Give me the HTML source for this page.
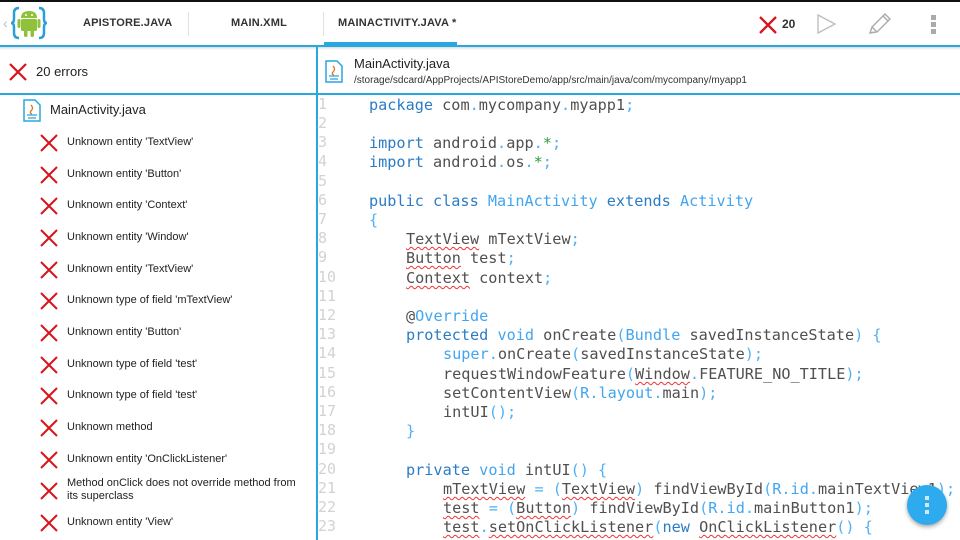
<!DOCTYPE html>
<html><head><meta charset="utf-8"><style>
*{margin:0;padding:0;box-sizing:border-box}
body{width:960px;height:540px;overflow:hidden;background:#fff;font-family:"Liberation Sans",sans-serif;position:relative}
.abs{position:absolute}
.tab{position:absolute;top:17px;font-size:11px;font-weight:bold;color:#333;letter-spacing:0.2px}
.err{position:absolute;left:40px;font-size:11px;color:#222;line-height:13px}
.err svg{position:absolute;left:0;top:-1px}
.err span{position:absolute;left:27px;top:1px;white-space:nowrap}
.ln{position:absolute;left:318px;font-family:"DejaVu Sans Mono",monospace;font-size:15px;color:#d2d2d2}
.cl{position:absolute;font-family:"DejaVu Sans Mono",monospace;font-size:15.2px;color:#505050;white-space:pre;margin-top:1px}
.k{color:#2b7cc4}.t{color:#42a5f0}.p{color:#4fb0f5}.g{color:#2e9e3a}
.u{text-decoration:underline wavy #e33;text-decoration-thickness:1px;text-underline-offset:2px}
</style></head><body>
<div class="abs" style="left:0;top:0;width:960px;height:2px;background:#111"></div>
<svg class="abs" style="left:2px;top:4px" width="52" height="38" viewBox="0 0 52 36">
<text x="1" y="23" font-size="14" fill="#bbb" font-family="Liberation Sans">‹</text>
<path d="M17 3 Q12 3 12 8 L12 14 Q12 18 9 18 Q12 18 12 22 L12 28 Q12 33 17 33" fill="none" stroke="#2a9fd8" stroke-width="2.5"/>
<path d="M37 3 Q42 3 42 8 L42 14 Q42 18 45 18 Q42 18 42 22 L42 28 Q42 33 37 33" fill="none" stroke="#2a9fd8" stroke-width="2.5"/>
<path d="M19 13 Q19 6 27 6 Q35 6 35 13 Z" fill="#8fc23a"/>
<rect x="19" y="14" width="16" height="12" rx="1.5" fill="#8fc23a"/>
<rect x="15.5" y="14" width="3" height="9" rx="1.5" fill="#8fc23a"/>
<rect x="35.5" y="14" width="3" height="9" rx="1.5" fill="#8fc23a"/>
<rect x="22" y="25" width="3.5" height="7" rx="1.5" fill="#8fc23a"/>
<rect x="28.5" y="25" width="3.5" height="7" rx="1.5" fill="#8fc23a"/>
<circle cx="24" cy="10" r="1" fill="#fff"/><circle cx="30" cy="10" r="1" fill="#fff"/>
</svg>
<div class="tab" style="left:83px">APISTORE.JAVA</div>
<div class="abs" style="left:188px;top:12px;width:1px;height:24px;background:#e2e2e2"></div>
<div class="tab" style="left:231px">MAIN.XML</div>
<div class="abs" style="left:323px;top:12px;width:1px;height:24px;background:#e2e2e2"></div>
<div class="tab" style="left:338px">MAINACTIVITY.JAVA *</div>
<div class="abs" style="left:324px;top:42px;width:133px;height:3px;background:#29a7df"></div>
<svg class="abs" style="left:758px;top:15px" width="20" height="20"><path d="M2 2L18 18M18 2L2 18" stroke="#d8141b" stroke-width="2.3"/></svg>
<div class="abs" style="left:782px;top:17px;font-size:12px;font-weight:bold;color:#333">20</div>
<svg class="abs" style="left:816px;top:13px" width="22" height="22"><path d="M2 2L19 11L2 20Z" fill="none" stroke="#bbb" stroke-width="1.3"/></svg>
<svg class="abs" style="left:866px;top:12px" width="26" height="24"><path d="M4 21L6 15L19 2L24 7L11 20Z M6 15L11 20 M17 4L22 9 M4 21L8 20" fill="none" stroke="#aaa" stroke-width="1.4"/></svg>
<div class="abs" style="left:931px;top:15px;width:5px;height:5px;background:#aaa"></div>
<div class="abs" style="left:931px;top:22px;width:5px;height:5px;background:#aaa"></div>
<div class="abs" style="left:931px;top:29px;width:5px;height:5px;background:#aaa"></div>
<div class="abs" style="left:0;top:45px;width:960px;height:2px;background:#29a7df"></div>
<div class="abs" style="left:0;top:47px;width:960px;height:3px;background:linear-gradient(#ddd,#fff)"></div>
<div class="abs" style="left:316px;top:47px;width:2px;height:493px;background:#29a7df"></div>
<div class="abs" style="left:0;top:93px;width:960px;height:2px;background:#29a7df"></div>
<svg class="abs" style="left:9px;top:63px" width="18" height="18"><path d="M1 1L17 17M17 1L1 17" stroke="#d8141b" stroke-width="2.2"/></svg>
<div class="abs" style="left:36px;top:64px;font-size:13px;color:#222">20 errors</div>
<svg class="abs" style="left:325px;top:60px" width="18" height="23" viewBox="0 0 18 23"><path d="M1 1H12L17 6V22H1Z" fill="#fff" stroke="#29a7df" stroke-width="1.5"/><path d="M8 6 Q11 9 8 12 Q6 14 9 15" fill="none" stroke="#e8701a" stroke-width="1.3"/><path d="M4 16H14M5 19H13" stroke="#29a7df" stroke-width="1.2"/></svg>
<div class="abs" style="left:354px;top:56px;font-size:13px;color:#222">MainActivity.java</div>
<div class="abs" style="left:354px;top:75px;font-size:10px;color:#333">/storage/sdcard/AppProjects/APIStoreDemo/app/src/main/java/com/mycompany/myapp1</div>
<svg class="abs" style="left:23px;top:99px" width="18" height="23" viewBox="0 0 18 23"><path d="M1 1H12L17 6V22H1Z" fill="#fff" stroke="#29a7df" stroke-width="1.5"/><path d="M8 6 Q11 9 8 12 Q6 14 9 15" fill="none" stroke="#e8701a" stroke-width="1.3"/><path d="M4 16H14M5 19H13" stroke="#29a7df" stroke-width="1.2"/></svg>
<div class="abs" style="left:50px;top:102px;font-size:13px;color:#222">MainActivity.java</div>
<div class="err" style="top:135px"><svg width="18" height="18"><path d="M1 1L17 17M17 1L1 17" stroke="#d8141b" stroke-width="2"/></svg><span>Unknown entity 'TextView'</span></div>
<div class="err" style="top:167px"><svg width="18" height="18"><path d="M1 1L17 17M17 1L1 17" stroke="#d8141b" stroke-width="2"/></svg><span>Unknown entity 'Button'</span></div>
<div class="err" style="top:198px"><svg width="18" height="18"><path d="M1 1L17 17M17 1L1 17" stroke="#d8141b" stroke-width="2"/></svg><span>Unknown entity 'Context'</span></div>
<div class="err" style="top:230px"><svg width="18" height="18"><path d="M1 1L17 17M17 1L1 17" stroke="#d8141b" stroke-width="2"/></svg><span>Unknown entity 'Window'</span></div>
<div class="err" style="top:262px"><svg width="18" height="18"><path d="M1 1L17 17M17 1L1 17" stroke="#d8141b" stroke-width="2"/></svg><span>Unknown entity 'TextView'</span></div>
<div class="err" style="top:293px"><svg width="18" height="18"><path d="M1 1L17 17M17 1L1 17" stroke="#d8141b" stroke-width="2"/></svg><span>Unknown type of field 'mTextView'</span></div>
<div class="err" style="top:325px"><svg width="18" height="18"><path d="M1 1L17 17M17 1L1 17" stroke="#d8141b" stroke-width="2"/></svg><span>Unknown entity 'Button'</span></div>
<div class="err" style="top:357px"><svg width="18" height="18"><path d="M1 1L17 17M17 1L1 17" stroke="#d8141b" stroke-width="2"/></svg><span>Unknown type of field 'test'</span></div>
<div class="err" style="top:388px"><svg width="18" height="18"><path d="M1 1L17 17M17 1L1 17" stroke="#d8141b" stroke-width="2"/></svg><span>Unknown type of field 'test'</span></div>
<div class="err" style="top:420px"><svg width="18" height="18"><path d="M1 1L17 17M17 1L1 17" stroke="#d8141b" stroke-width="2"/></svg><span>Unknown method</span></div>
<div class="err" style="top:452px"><svg width="18" height="18"><path d="M1 1L17 17M17 1L1 17" stroke="#d8141b" stroke-width="2"/></svg><span>Unknown entity 'OnClickListener'</span></div>
<div class="err" style="top:483px"><svg width="18" height="18"><path d="M1 1L17 17M17 1L1 17" stroke="#d8141b" stroke-width="2"/></svg><span style="top:-6px">Method onClick does not override method from<br>its superclass</span></div>
<div class="err" style="top:515px"><svg width="18" height="18"><path d="M1 1L17 17M17 1L1 17" stroke="#d8141b" stroke-width="2"/></svg><span>Unknown entity 'View'</span></div>
<div class="ln" style="top:95px">1</div><div class="ln" style="top:114px">2</div><div class="ln" style="top:133px">3</div><div class="ln" style="top:152px">4</div><div class="ln" style="top:172px">5</div><div class="ln" style="top:191px">6</div><div class="ln" style="top:210px">7</div><div class="ln" style="top:229px">8</div><div class="ln" style="top:248px">9</div><div class="ln" style="top:268px">10</div><div class="ln" style="top:287px">11</div><div class="ln" style="top:306px">12</div><div class="ln" style="top:325px">13</div><div class="ln" style="top:344px">14</div><div class="ln" style="top:364px">15</div><div class="ln" style="top:383px">16</div><div class="ln" style="top:402px">17</div><div class="ln" style="top:421px">18</div><div class="ln" style="top:440px">19</div><div class="ln" style="top:460px">20</div><div class="ln" style="top:479px">21</div><div class="ln" style="top:498px">22</div><div class="ln" style="top:517px">23</div>
<div class="cl" style="left:369px;top:95px"><span class="k">package</span> com<span class="p">.</span>mycompany<span class="p">.</span>myapp1<span class="p">;</span></div>
<div class="cl" style="left:369px;top:133px"><span class="k">import</span> android<span class="p">.</span>app<span class="p">.</span><span class="g">*</span><span class="p">;</span></div>
<div class="cl" style="left:369px;top:152px"><span class="k">import</span> android<span class="p">.</span>os<span class="p">.</span><span class="g">*</span><span class="p">;</span></div>
<div class="cl" style="left:369px;top:191px"><span class="k">public class</span> <span class="t">MainActivity</span> <span class="k">extends</span> <span class="t">Activity</span></div>
<div class="cl" style="left:369px;top:210px"><span class="p">{</span></div>
<div class="cl" style="left:406px;top:229px"><span class="u">TextView</span> mTextView<span class="p">;</span></div>
<div class="cl" style="left:406px;top:248px"><span class="u">Button</span> test<span class="p">;</span></div>
<div class="cl" style="left:406px;top:268px"><span class="u">Context</span> context<span class="p">;</span></div>
<div class="cl" style="left:406px;top:306px">@<span class="t">Override</span></div>
<div class="cl" style="left:406px;top:325px"><span class="k">protected</span> <span class="t">void</span> onCreate<span class="p">(</span><span class="t">Bundle</span> savedInstanceState<span class="p">) {</span></div>
<div class="cl" style="left:443px;top:344px"><span class="t">super</span><span class="p">.</span>onCreate<span class="p">(</span>savedInstanceState<span class="p">);</span></div>
<div class="cl" style="left:443px;top:364px">requestWindowFeature<span class="p">(</span><span class="u">Window</span><span class="p">.</span>FEATURE_NO_TITLE<span class="p">);</span></div>
<div class="cl" style="left:443px;top:383px">setContentView<span class="p">(</span><span class="t">R</span><span class="p">.</span><span class="t">layout</span><span class="p">.</span>main<span class="p">);</span></div>
<div class="cl" style="left:443px;top:402px">intUI<span class="p">();</span></div>
<div class="cl" style="left:406px;top:421px"><span class="p">}</span></div>
<div class="cl" style="left:406px;top:460px"><span class="k">private</span> <span class="t">void</span> intUI<span class="p">() {</span></div>
<div class="cl" style="left:443px;top:479px"><span class="u">mTextView</span> <span class="p">= (</span><span class="u">TextView</span><span class="p">)</span> findViewById<span class="p">(</span><span class="t">R</span><span class="p">.</span><span class="t">id</span><span class="p">.</span>mainTextView1<span class="p">);</span></div>
<div class="cl" style="left:443px;top:498px"><span class="u">test</span> <span class="p">= (</span><span class="u">Button</span><span class="p">)</span> findViewById<span class="p">(</span><span class="t">R</span><span class="p">.</span><span class="t">id</span><span class="p">.</span>mainButton1<span class="p">);</span></div>
<div class="cl" style="left:443px;top:517px"><span class="u">test</span><span class="p">.</span><span class="u">setOnClickListener</span><span class="p">(</span><span class="k">new</span> <span class="u">OnClickListener</span><span class="p">() {</span></div>
<div class="abs" style="left:907px;top:485px;width:40px;height:40px;border-radius:50%;background:#2eaaee;box-shadow:0 2px 4px rgba(0,0,0,0.35)"></div>
<div class="abs" style="left:925px;top:496px;width:4px;height:4px;background:#cfeafc"></div>
<div class="abs" style="left:925px;top:503px;width:4px;height:4px;background:#cfeafc"></div>
<div class="abs" style="left:925px;top:510px;width:4px;height:4px;background:#cfeafc"></div>
</body></html>
